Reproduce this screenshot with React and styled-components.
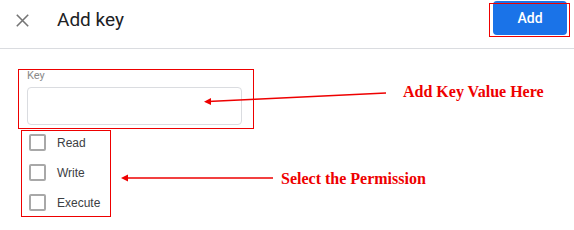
import React from "react";
import styled, { createGlobalStyle } from "styled-components";

const Global = createGlobalStyle`
  html, body { margin: 0; padding: 0; background: #fff; }
  body { font-family: Roboto, "Liberation Sans", Arial, sans-serif; }
  * { box-sizing: border-box; }
`;

const ANNOT = "#ee0000";

const Page = styled.div`
  position: relative;
  width: 574px;
  height: 230px;
  overflow: hidden;
  background: #fff;
`;

const Header = styled.header`
  height: 49px;
  display: flex;
  align-items: flex-start;
  border-bottom: 1px solid #dadce0;
  padding: 0 7px 0 16px;
`;

const CloseButton = styled.button`
  width: 13px;
  height: 13px;
  margin-top: 14px;
  padding: 0;
  border: 0;
  background: none;
  display: flex;
  cursor: pointer;
`;

const Title = styled.h1`
  margin: 8px 0 0 28px;
  font-family: Roboto, "Liberation Sans", sans-serif;
  font-size: 19px;
  line-height: 24px;
  font-weight: 400;
  color: #202124;
  flex: 1;
`;

const PrimaryButton = styled.button`
  margin-top: 1px;
  width: 74px;
  height: 34px;
  border: 0;
  border-radius: 4px;
  background: #1a73e8;
  color: #fff;
  font-family: Roboto, "Liberation Sans", sans-serif;
  font-size: 14px;
  font-weight: 500;
  cursor: pointer;
`;

const Body = styled.main`
  display: flex;
  flex-direction: column;
  align-items: flex-start;
`;

const Highlight = styled.div`
  border: 1px solid ${ANNOT};
`;

const FieldBox = styled(Highlight)`
  margin: 20px 0 0 18px;
  width: 236px;
  height: 60px;
  padding: 0 11px 3px 8px;
  display: flex;
  flex-direction: column;
`;

const FieldLabel = styled.label`
  font-size: 11px;
  line-height: 12px;
  color: #8a8a8a;
  font-family: Roboto, "Liberation Sans", sans-serif;
`;

const TextInput = styled.input`
  margin-top: 5px;
  width: 215px;
  height: 38px;
  border: 1px solid #dadce0;
  border-radius: 4px;
  outline: none;
  padding: 0 8px;
  background: #fff;
`;

const PermBox = styled(Highlight)`
  margin: 1px 0 0 21px;
  width: 90px;
  height: 87px;
  padding: 3px 0 0 7px;
  display: flex;
  flex-direction: column;
  gap: 13px;
`;

const CheckRow = styled.label`
  display: flex;
  align-items: center;
  gap: 11px;
  height: 17px;
  font-family: "Liberation Sans", Arial, sans-serif;
  font-size: 12px;
  color: #3c4043;
`;

const Box = styled.span`
  width: 17px;
  height: 17px;
  border: 2px solid #a8a8a8;
  border-radius: 2px;
  flex: none;
`;

const ButtonMark = styled.div`
  position: absolute;
  left: 489px;
  top: 3px;
  width: 81px;
  height: 34px;
  border: 1px solid ${ANNOT};
  pointer-events: none;
`;

const Callout = styled.div`
  position: absolute;
  left: ${(p) => p.$x}px;
  top: ${(p) => p.$y}px;
  font-family: "Liberation Serif", "Times New Roman", serif;
  font-weight: 700;
  font-size: 16px;
  line-height: 16px;
  color: ${ANNOT};
  white-space: nowrap;
`;

const Arrows = styled.svg`
  position: absolute;
  left: 0;
  top: 0;
  pointer-events: none;
`;

const perms = ["Read", "Write", "Execute"];

export default function App() {
  return (
    <Page>
      <Global />
      <Header>
        <CloseButton aria-label="Close">
          <svg width="13" height="13" viewBox="0 0 13 13">
            <path d="M0.8 0.8 L12.2 12.2 M12.2 0.8 L0.8 12.2" stroke="#757575" strokeWidth="1.6" fill="none" />
          </svg>
        </CloseButton>
        <Title>Add key</Title>
        <PrimaryButton>Add</PrimaryButton>
      </Header>
      <Body>
        <FieldBox>
          <FieldLabel>Key</FieldLabel>
          <TextInput />
        </FieldBox>
        <PermBox>
          {perms.map((p) => (
            <CheckRow key={p}>
              <Box />
              {p}
            </CheckRow>
          ))}
        </PermBox>
      </Body>
      <ButtonMark />
      <Arrows width="574" height="230" viewBox="0 0 574 230">
        <line x1="386" y1="93" x2="208" y2="101.5" stroke={ANNOT} strokeWidth="1.6" />
        <polygon points="204,101.7 211,98 211,105" fill={ANNOT} />
        <line x1="273" y1="178" x2="125" y2="178" stroke={ANNOT} strokeWidth="1.6" />
        <polygon points="121,178 128,174.5 128,181.5" fill={ANNOT} />
      </Arrows>
      <Callout $x={403} $y={84}>Add Key Value Here</Callout>
      <Callout $x={281} $y={171}>Select the Permission</Callout>
    </Page>
  );
}
